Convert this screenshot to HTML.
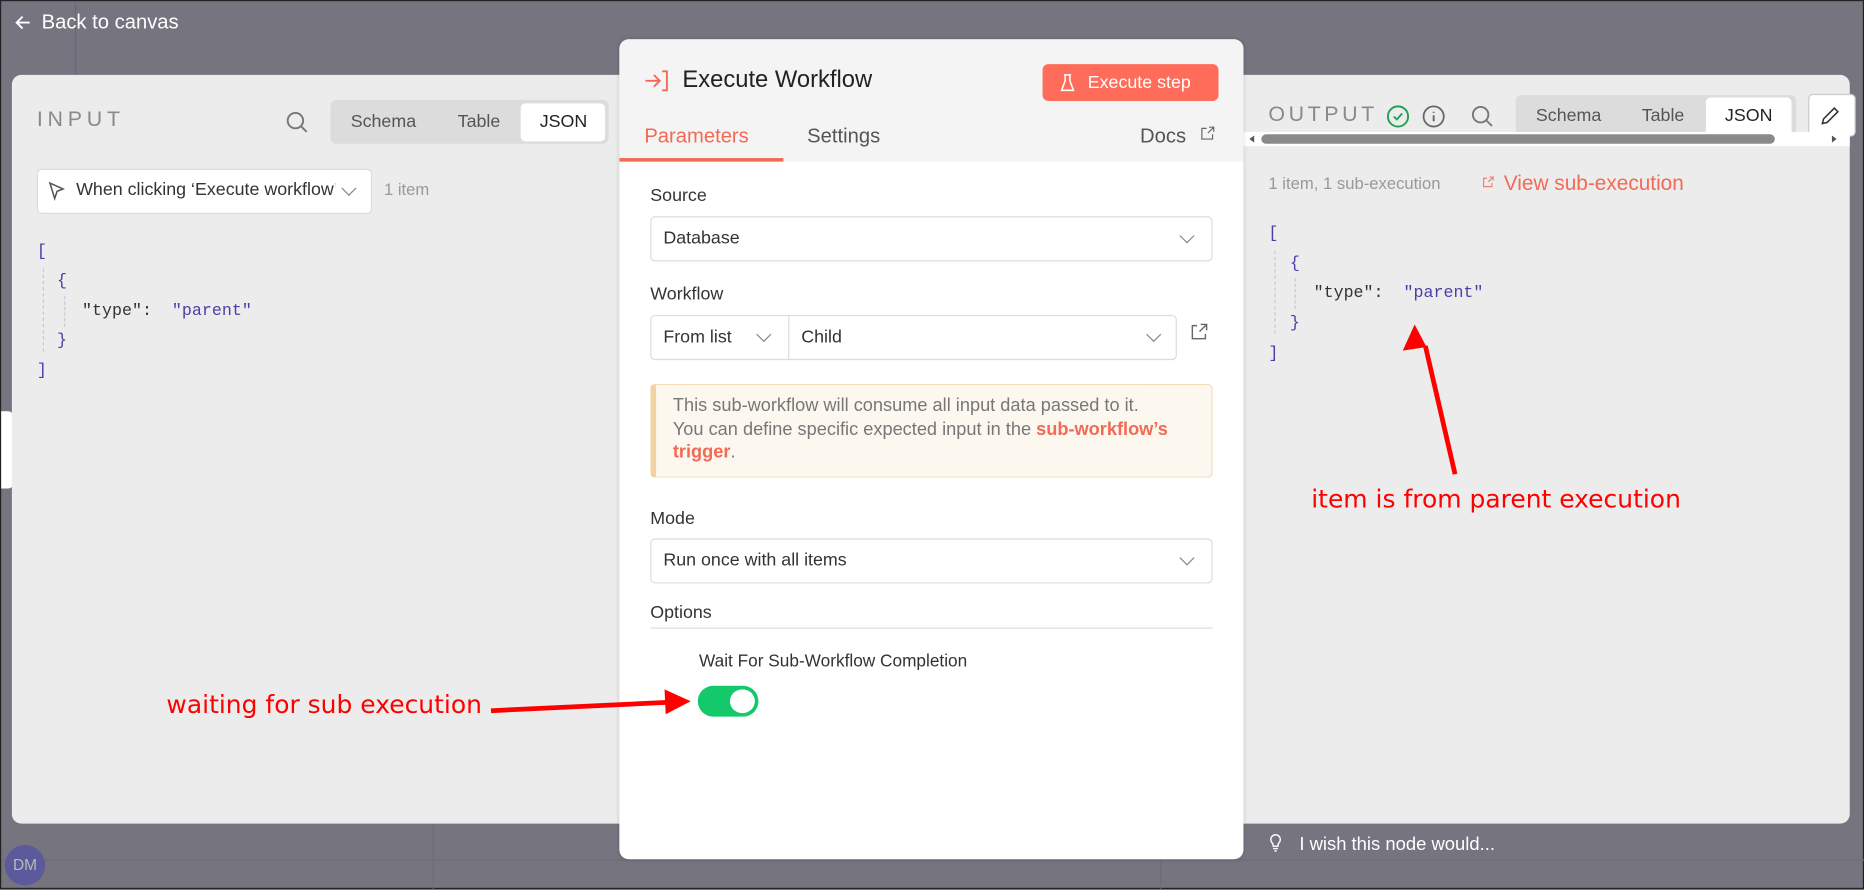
<!DOCTYPE html>
<html><head><meta charset="utf-8"><style>
html,body{margin:0;padding:0;width:1864px;height:889px;overflow:hidden;background:#76747f;font-family:"Liberation Sans",sans-serif}
#w{position:absolute;left:0;top:0;width:1568px;height:748px;transform:scale(1.18878,1.18850);transform-origin:0 0;border:1px solid #222;box-sizing:border-box;background:#76747f}
.a{position:absolute}
.mono{font-family:"Liberation Mono",monospace;font-size:14px}
.pu{color:#4a3fa8}
.t{color:#333;font-size:15px}
.sel{position:absolute;background:#fff;border:1px solid #dcdcdc;border-radius:4px;box-sizing:border-box}
.chev{position:absolute;width:8px;height:8px;border-right:1.2px solid #888;border-bottom:1.2px solid #888;transform:rotate(45deg)}
</style></head><body><div id="w">
<div class="a" style="left:62px;top:0;width:1px;height:62px;background:#6b6975"></div>
<div class="a" style="left:0;top:722px;width:1568px;height:1px;background:#6d6b77"></div>
<div class="a" style="left:363px;top:692px;width:1px;height:56px;background:#6d6b77"></div>
<div class="a" style="left:975px;top:692px;width:1px;height:56px;background:#6d6b77"></div>
<svg class="a" style="left:10px;top:10px" width="16" height="16" viewBox="0 0 16 16"><path d="M14 8H3M8 3L3 8l5 5" stroke="#fff" stroke-width="1.6" fill="none"/></svg>
<div class="a" style="left:34px;top:8px;color:#fff;font-size:17px">Back to canvas</div>
<div class="a" style="left:0;top:345px;width:10px;height:65px;background:#fff;border-radius:0 4px 4px 0"></div>
<div class="a" style="left:9px;top:62px;width:1546px;height:630px;background:#ececec;border-radius:8px"></div>
<div class="a" style="left:30px;top:89px;color:#8a8a8a;font-size:18px;letter-spacing:4px">INPUT</div>
<svg class="a" style="left:239px;top:92px" width="20" height="20" viewBox="0 0 20 20"><circle cx="8.5" cy="8.5" r="6.5" stroke="#777" stroke-width="1.6" fill="none"/><path d="M13.5 13.5L18 18" stroke="#777" stroke-width="1.6"/></svg>
<div class="a" style="left:277px;top:83px;width:234px;height:37px;background:#dcdcdc;border-radius:5px"></div>
<div class="a" style="left:437px;top:86px;width:71px;height:32px;background:#fff;border-radius:4px"></div>
<div class="a" style="left:294px;top:93px;font-size:15px;color:#555">Schema</div>
<div class="a" style="left:384px;top:93px;font-size:15px;color:#555">Table</div>
<div class="a" style="left:453px;top:93px;font-size:15px;color:#222">JSON</div>
<div class="sel" style="left:30px;top:141px;width:282px;height:38px"></div>
<svg class="a" style="left:39px;top:151px" width="16" height="18" viewBox="0 0 16 18"><path d="M2 2l11 5-5 2-2 6z" stroke="#555" stroke-width="1.3" fill="none"/></svg>
<div class="a" style="left:63px;top:150px;font-size:15px;color:#333;width:218px;overflow:hidden;white-space:nowrap">When clicking ‘Execute workflow’</div>
<div class="chev" style="left:288px;top:153px"></div>
<div class="a" style="left:322px;top:150px;font-size:14px;color:#999">1 item</div>
<div class="a" style="left:35px;top:225px;height:70px;border-left:1px dashed #c8c8d8"></div>
<div class="a" style="left:53px;top:248px;height:26px;border-left:1px dashed #c8c8d8"></div>
<div class="a mono pu" style="left:30px;top:203px">[</div>
<div class="a mono pu" style="left:47px;top:228px">{</div>
<div class="a mono" style="left:68px;top:253px;color:#333">"type":&nbsp; <span class="pu">"parent"</span></div>
<div class="a mono pu" style="left:47px;top:278px">}</div>
<div class="a mono pu" style="left:30px;top:303px">]</div>

<div class="a" style="left:1066px;top:85px;color:#8a8a8a;font-size:18px;letter-spacing:3px">OUTPUT</div>
<svg class="a" style="left:1165px;top:87px" width="20" height="20"><circle cx="10" cy="10" r="8.5" stroke="#20a050" stroke-width="1.6" fill="none"/><path d="M6.5 10l2.5 2.5 4.5-5" stroke="#20a050" stroke-width="1.5" fill="none"/></svg>
<svg class="a" style="left:1195px;top:87px" width="20" height="20"><circle cx="10" cy="10" r="8.5" stroke="#666" stroke-width="1.5" fill="none"/><path d="M10 9v5M10 6v1" stroke="#666" stroke-width="1.6"/></svg>
<svg class="a" style="left:1236px;top:87px" width="20" height="20" viewBox="0 0 20 20"><circle cx="8.5" cy="8.5" r="6.5" stroke="#777" stroke-width="1.6" fill="none"/><path d="M13.5 13.5L18 18" stroke="#777" stroke-width="1.6"/></svg>
<div class="a" style="left:1274px;top:79px;width:236px;height:36px;background:#dcdcdc;border-radius:5px 5px 0 0"></div>
<div class="a" style="left:1434px;top:81px;width:72px;height:34px;background:#fff;border-radius:4px 4px 0 0"></div>
<div class="a" style="left:1291px;top:88px;font-size:15px;color:#555">Schema</div>
<div class="a" style="left:1380px;top:88px;font-size:15px;color:#555">Table</div>
<div class="a" style="left:1450px;top:88px;font-size:15px;color:#222">JSON</div>
<div class="a" style="left:1520px;top:78px;width:40px;height:36px;background:#fff;border:1px solid #ccc;border-radius:4px;box-sizing:border-box"></div>
<svg class="a" style="left:1528px;top:86px" width="20" height="20"><path d="M4 17l1-4 9-9 3 3-9 9z" stroke="#333" stroke-width="1.3" fill="none"/></svg>
<div class="a" style="left:1045px;top:110px;width:510px;height:12px;background:#fff"></div>
<div class="a" style="left:1060px;top:112px;width:432px;height:8px;background:#8a8a8a;border-radius:4px"></div>
<div class="a" style="left:1050px;top:113px;width:0;height:0;border:3px solid transparent;border-right:4px solid #555;border-left:0"></div>
<div class="a" style="left:1540px;top:113px;width:0;height:0;border:3px solid transparent;border-left:4px solid #555;border-right:0"></div>
<div class="a" style="left:1066px;top:145px;font-size:14px;color:#999">1 item, 1 sub-execution</div>
<svg class="a" style="left:1246px;top:147px" width="10" height="10"><path d="M4 2H1v7h7V6M5 5l4-4M6 1h3v3" stroke="#f08070" fill="none"/></svg>
<div class="a" style="left:1264px;top:143px;font-size:17.5px;color:#f26a55">View sub-execution</div>
<div class="a" style="left:1071px;top:210px;height:70px;border-left:1px dashed #c8c8d8"></div>
<div class="a" style="left:1088px;top:233px;height:26px;border-left:1px dashed #c8c8d8"></div>
<div class="a mono pu" style="left:1066px;top:188px">[</div>
<div class="a mono pu" style="left:1084px;top:213px">{</div>
<div class="a mono" style="left:1104px;top:238px;color:#333">"type":&nbsp; <span class="pu">"parent"</span></div>
<div class="a mono pu" style="left:1084px;top:263px">}</div>
<div class="a mono pu" style="left:1066px;top:289px">]</div>

<div class="a" style="left:1102px;top:407px;font-size:21px;color:#f00;font-family:'DejaVu Sans',sans-serif">item is from parent execution</div>
<div class="a" style="left:139px;top:580px;font-size:21px;color:#f00;font-family:'DejaVu Sans',sans-serif">waiting for sub execution</div>

<div class="a" style="left:520px;top:32px;width:525px;height:690px;background:#fff;border-radius:8px;overflow:hidden;box-shadow:0 0 4px rgba(0,0,0,.15)">
<div class="a" style="left:0;top:0;width:525px;height:103px;background:#f4f4f4"></div>
<svg class="a" style="left:20px;top:25px" width="24" height="20"><path d="M2 10h12M9 5l5 5-5 5M16 2h4v16h-4" stroke="#f26a55" stroke-width="1.6" fill="none"/></svg>
<div class="a" style="left:53px;top:23px;font-size:20px;color:#222">Execute Workflow</div>
<div class="a" style="left:356px;top:21px;width:148px;height:31px;background:#ff6d5a;border-radius:5px"></div>
<svg class="a" style="left:370px;top:28px" width="14" height="18"><path d="M4 2h6M5 2v5l-3 8h10l-3-8V2" stroke="#fff" stroke-width="1.3" fill="none"/></svg>
<div class="a" style="left:394px;top:28px;font-size:15px;color:#fff">Execute step</div>
<div class="a" style="left:21px;top:72px;font-size:17px;color:#f26a55">Parameters</div>
<div class="a" style="left:0;top:100px;width:138px;height:3px;background:#f26a55"></div>
<div class="a" style="left:158px;top:72px;font-size:17px;color:#555">Settings</div>
<div class="a" style="left:438px;top:72px;font-size:17px;color:#555">Docs</div>
<svg class="a" style="left:489px;top:73px" width="12" height="12"><path d="M5 2H1v9h9V7M6 6l5-5M7 1h4v4" stroke="#666" fill="none"/></svg>
<div class="a t" style="left:26px;top:123px">Source</div>
<div class="sel" style="left:26px;top:149px;width:473px;height:38px"></div>
<div class="a t" style="left:37px;top:159px">Database</div>
<div class="chev" style="left:473px;top:161px"></div>
<div class="a t" style="left:26px;top:206px">Workflow</div>
<div class="sel" style="left:26px;top:232px;width:443px;height:38px"></div>
<div class="a" style="left:142px;top:232px;width:1px;height:38px;background:#dcdcdc"></div>
<div class="a t" style="left:37px;top:242px">From list</div>
<div class="chev" style="left:117px;top:244px"></div>
<div class="a t" style="left:153px;top:242px">Child</div>
<div class="chev" style="left:445px;top:244px"></div>
<svg class="a" style="left:480px;top:238px" width="16" height="16"><path d="M6 3H2v11h11V10M8 8l6-6M9 2h5v5" stroke="#666" stroke-width="1.2" fill="none"/></svg>
<div class="a" style="left:26px;top:290px;width:473px;height:79px;background:#fcf8f0;border:1px solid #f5ddb5;border-left:5px solid #f2d4a2;border-radius:4px;box-sizing:border-box"></div>
<div class="a" style="left:45px;top:299px;white-space:nowrap;font-size:15.3px;line-height:19.5px;color:#777">This sub-workflow will consume all input data passed to it.<br>You can define specific expected input in the <b style="color:#f26a55;font-weight:bold">sub-workflow’s</b><br><b style="color:#f26a55;font-weight:bold">trigger</b>.</div>
<div class="a t" style="left:26px;top:395px">Mode</div>
<div class="sel" style="left:26px;top:420px;width:473px;height:38px"></div>
<div class="a t" style="left:37px;top:430px">Run once with all items</div>
<div class="chev" style="left:473px;top:432px"></div>
<div class="a t" style="left:26px;top:474px">Options</div>
<div class="a" style="left:26px;top:495px;width:473px;height:1px;background:#ddd"></div>
<div class="a" style="left:67px;top:516px;font-size:14.5px;color:#333">Wait For Sub-Workflow Completion</div>
<div class="a" style="left:66px;top:544px;width:51px;height:26px;background:#13c96a;border-radius:13px"></div>
<div class="a" style="left:93px;top:547px;width:21px;height:20px;background:#fff;border-radius:50%"></div>
</div>

<svg class="a" style="left:0;top:0" width="1568" height="748"><path d="M1223 398L1198 290" stroke="#f00" stroke-width="4"/><path d="M1189 272l-10 22 20-3z" fill="#f00"/><path d="M412 597L560 590" stroke="#f00" stroke-width="4"/><path d="M580 589l-22-10 1 21z" fill="#f00"/></svg>

<svg class="a" style="left:1066px;top:699px" width="12" height="18"><path d="M3 9a4 4 0 1 1 6 0c-1 1-1 2-1 3H4c0-1 0-2-1-3zM4 14h4M5 16h2" stroke="#fff" stroke-width="1.2" fill="none"/></svg>
<div class="a" style="left:1092px;top:701px;font-size:15.5px;color:#fff">I wish this node would...</div>
<div class="a" style="left:3px;top:710px;width:34px;height:34px;border-radius:50%;background:#5b5a9a;color:#bbb;font-size:13px;line-height:34px;text-align:center">DM</div>
</div></body></html>
